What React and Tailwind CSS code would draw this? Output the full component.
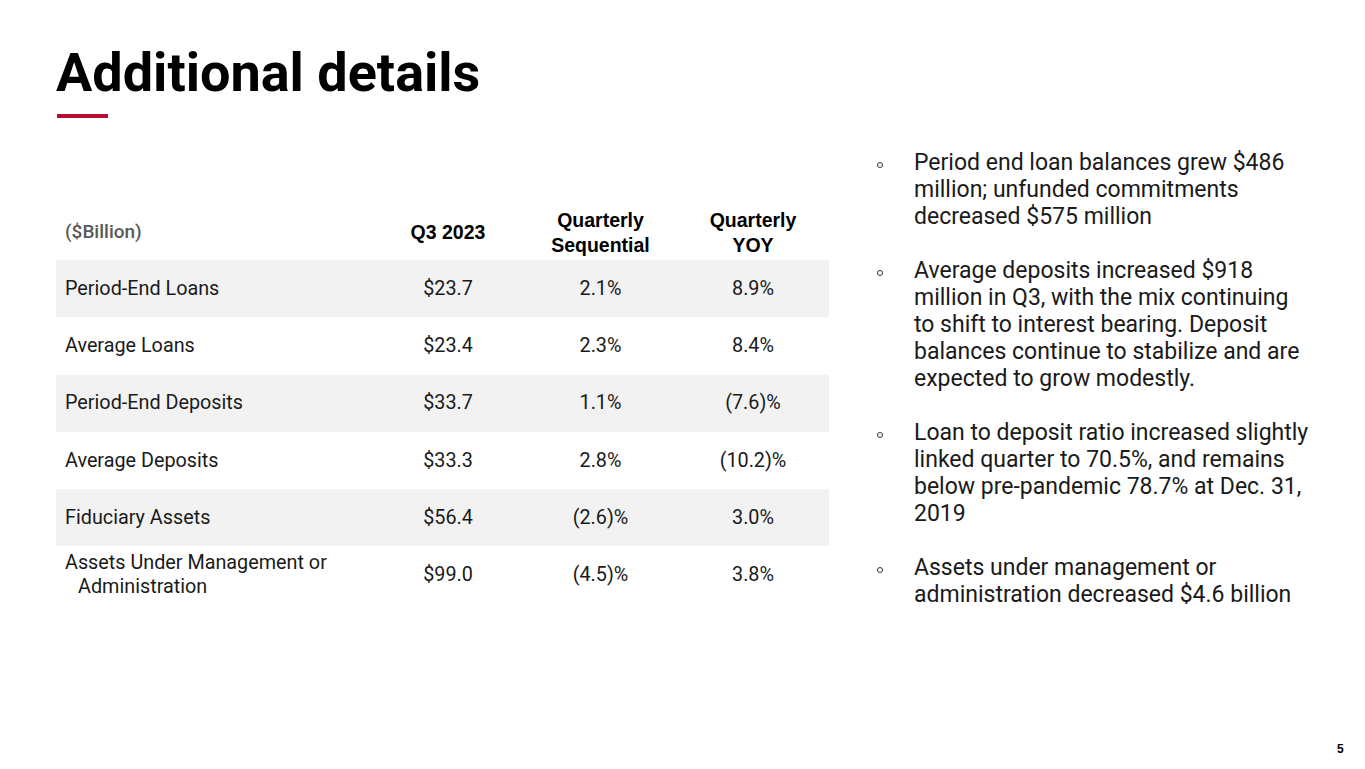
export default function App() {
  const rows = [
    ["Period-End Loans", "$23.7", "2.1%", "8.9%"],
    ["Average Loans", "$23.4", "2.3%", "8.4%"],
    ["Period-End Deposits", "$33.7", "1.1%", "(7.6)%"],
    ["Average Deposits", "$33.3", "2.8%", "(10.2)%"],
    ["Fiduciary Assets", "$56.4", "(2.6)%", "3.0%"],
    ["Assets Under Management or Administration", "$99.0", "(4.5)%", "3.8%"],
  ];
  const bullets = [
    "Period end loan balances grew $486 million; unfunded commitments decreased $575 million",
    "Average deposits increased $918 million in Q3, with the mix continuing to shift to interest bearing. Deposit balances continue to stabilize and are expected to grow modestly.",
    "Loan to deposit ratio increased slightly linked quarter to 70.5%, and remains below pre-pandemic 78.7% at Dec. 31, 2019",
    "Assets under management or administration decreased $4.6 billion",
  ];
  return (
    <div className="relative w-[1365px] h-[769px] bg-white overflow-hidden font-['Roboto',sans-serif] text-[#1a1a1a]">
      <div className="pl-[56px] pt-[46px]">
        <h1 className="text-[54px] leading-none font-bold text-black">Additional details</h1>
        <div className="mt-[14px] ml-[1px] w-[51px] h-[4px] bg-[#b80d30]" />
      </div>
      <div className="flex">
        <div className="ml-[56px] mt-[87px] w-[773px]">
          <div className="grid grid-cols-[316px_152px_153px_152px] h-[55px] items-center">
            <div className="pl-[9px] text-[19px] font-medium text-[#595959]">($Billion)</div>
            <div className="text-center font-['Liberation_Sans',Arial,sans-serif] font-bold text-[19.5px] leading-[25px] text-black">Q3 2023</div>
            <div className="text-center font-['Liberation_Sans',Arial,sans-serif] font-bold text-[19.5px] leading-[25px] text-black">Quarterly<br />Sequential</div>
            <div className="text-center font-['Liberation_Sans',Arial,sans-serif] font-bold text-[19.5px] leading-[25px] text-black">Quarterly<br />YOY</div>
          </div>
          {rows.map((r, i) => (
            <div
              key={i}
              className={`grid grid-cols-[316px_152px_153px_152px] h-[57.3px] items-center text-[19.8px] ${i % 2 === 0 ? "bg-[#f2f2f2]" : "bg-white"}`}
            >
              <div className={i === 5 ? "pl-[22px] [text-indent:-13px] leading-[24px] pr-2" : "pl-[9px]"}>{r[0]}</div>
              <div className="text-center">{r[1]}</div>
              <div className="text-center">{r[2]}</div>
              <div className="text-center">{r[3]}</div>
            </div>
          ))}
        </div>
        <div className="ml-[45px] mt-[31px] w-[445px] flex flex-col gap-[27px] text-[23px] leading-[27px] text-[#1a1a1a]">
          {bullets.map((b, i) => (
            <div key={i} className="flex">
              <div className="w-[40px] shrink-0 h-[27px] flex items-center pl-[3px] pt-[5px]">
                <span className="block w-[6px] h-[6px] rounded-full border border-[#333]" />
              </div>
              <div className="w-[397px]">{b}</div>
            </div>
          ))}
        </div>
      </div>
      <div className="absolute left-[1337px] top-[740px] text-[12px] font-bold font-['Liberation_Sans',Arial,sans-serif] text-black">5</div>
    </div>
  );
}
